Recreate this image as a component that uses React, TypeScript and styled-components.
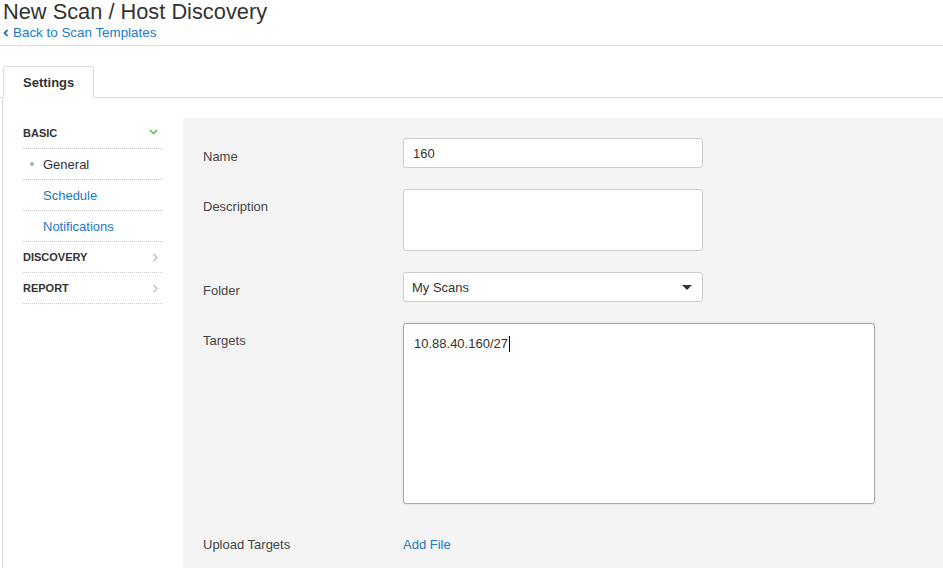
import React from "react";
import styled, { createGlobalStyle } from "styled-components";

const Global = createGlobalStyle`
  html, body { margin: 0; padding: 0; background: #fff; }
  body {
    font-family: "Liberation Sans", Arial, Helvetica, sans-serif;
    color: #333;
    overflow: hidden;
  }
  * { box-sizing: border-box; }
`;

const Page = styled.div`
  width: 943px;
  height: 568px;
  overflow: hidden;
`;

const Header = styled.header`
  padding: 0 0 3px 3px;
  border-bottom: 1px solid #ddd;
`;

const Title = styled.h1`
  margin: 0;
  font-size: 21.8px;
  line-height: 24px;
  font-weight: normal;
  color: #333;
`;

const BackLink = styled.a`
  display: flex;
  align-items: center;
  gap: 4px;
  font-size: 13.4px;
  line-height: 18px;
  color: #1a7ac6;
  text-decoration: none;
`;

const Tabs = styled.div`
  margin-top: 20px;
  padding-left: 3px;
  display: flex;
  border-bottom: 1px solid #ddd;
`;

const Tab = styled.div`
  width: 91px;
  height: 32px;
  margin-bottom: -1px;
  border: 1px solid #ddd;
  border-bottom-color: #fff;
  border-radius: 3px 3px 0 0;
  background: #fff;
  padding-left: 19px;
  padding-top: 1px;
  font-size: 13px;
  font-weight: bold;
  line-height: 30px;
  color: #333;
`;

const Panel = styled.div`
  margin-left: 2px;
  border-left: 1px solid #ddd;
  padding: 20px 0 0 20px;
  display: grid;
  grid-template-columns: 140px 1fr;
  column-gap: 20px;
  height: 470px;
`;

const Nav = styled.nav`
  display: flex;
  flex-direction: column;
`;

const NavRow = styled.div<{ $sub?: boolean; $link?: boolean }>`
  position: relative;
  height: 31px;
  border-bottom: 1px dotted #ccc;
  display: flex;
  align-items: center;
  justify-content: space-between;
  padding-left: ${(p) => (p.$sub ? "20px" : "0")};
  padding-right: 5px;
  font-size: ${(p) => (p.$sub ? "13px" : "11px")};
  font-weight: ${(p) => (p.$sub ? "normal" : "bold")};
  text-transform: ${(p) => (p.$sub ? "none" : "uppercase")};
  color: ${(p) => (p.$link ? "#1a7ac6" : "#333")};
`;

const Bullet = styled.span`
  position: absolute;
  left: 7px;
  top: 13px;
  width: 4px;
  height: 4px;
  border-radius: 50%;
  background: #aaa;
`;

const Content = styled.section`
  background: #f4f4f4;
  padding: 20px 0 0 20px;
  display: flex;
  flex-direction: column;
  gap: 21px;
`;

const FieldRow = styled.div<{ $extra?: number }>`
  display: grid;
  grid-template-columns: 200px 1fr;
  align-items: start;
  margin-top: ${(p) => p.$extra ?? 0}px;
`;

const Label = styled.div<{ $nudge?: number }>`
  padding-top: ${(p) => 8 + (p.$nudge ?? 0)}px;
  font-size: 13px;
  line-height: 20px;
  color: #444;
`;

const Box = styled.div<{ $w: number; $h: number; $focus?: boolean }>`
  width: ${(p) => p.$w}px;
  height: ${(p) => p.$h}px;
  background: #fff;
  border: 1px solid ${(p) => (p.$focus ? "#aaa" : "#ccc")};
  border-radius: 3px;
  box-shadow: ${(p) => (p.$focus ? "0 0 2px rgba(0,0,0,0.15)" : "none")};
  font-size: 13px;
  color: #333;
`;

const InputText = styled.div`
  padding: 1px 9px 0;
  line-height: 28px;
`;

const SelectInner = styled.div`
  display: flex;
  align-items: center;
  justify-content: space-between;
  padding: 1px 10px 0 8px;
  height: 28px;
`;

const Caret = styled.span`
  width: 0;
  height: 0;
  border-left: 5px solid transparent;
  border-right: 5px solid transparent;
  border-top: 5px solid #333;
`;

const AreaText = styled.div`
  padding: 11px 10px;
  line-height: 18px;
  display: flex;
  align-items: center;
`;

const Cursor = styled.span`
  display: inline-block;
  width: 1px;
  height: 16px;
  background: #000;
  margin-left: 1px;
`;

const FileLink = styled.a`
  padding-top: 8px;
  font-size: 13px;
  line-height: 20px;
  color: #1a7ac6;
  text-decoration: none;
`;

const ChevronDown = () => (
  <svg width="9" height="6" viewBox="0 0 9 6" style={{ marginTop: -2 }}>
    <polyline points="1,1 4.5,4.5 8,1" fill="none" stroke="#5cb85c" strokeWidth="1.5" />
  </svg>
);

const ChevronRight = () => (
  <svg width="6" height="9" viewBox="0 0 6 9">
    <polyline points="1.5,1 5,4.5 1.5,8" fill="none" stroke="#bbb" strokeWidth="1.3" />
  </svg>
);

const BackChevron = () => (
  <svg width="6" height="8" viewBox="0 0 6 8">
    <polyline points="4.5,1 1.5,4 4.5,7" fill="none" stroke="#1a7ac6" strokeWidth="1.8" />
  </svg>
);

export default function App() {
  return (
    <Page>
      <Global />
      <Header>
        <Title>New Scan / Host Discovery</Title>
        <BackLink href="#">
          <BackChevron />
          Back to Scan Templates
        </BackLink>
      </Header>
      <Tabs>
        <Tab>Settings</Tab>
      </Tabs>
      <Panel>
        <Nav>
          <NavRow>
            Basic
            <ChevronDown />
          </NavRow>
          <NavRow $sub>
            <Bullet />
            General
          </NavRow>
          <NavRow $sub $link>Schedule</NavRow>
          <NavRow $sub $link>Notifications</NavRow>
          <NavRow>
            Discovery
            <ChevronRight />
          </NavRow>
          <NavRow>
            Report
            <ChevronRight />
          </NavRow>
        </Nav>
        <Content>
          <FieldRow>
            <Label $nudge={1}>Name</Label>
            <Box $w={300} $h={30}>
              <InputText>160</InputText>
            </Box>
          </FieldRow>
          <FieldRow>
            <Label>Description</Label>
            <Box $w={300} $h={62} />
          </FieldRow>
          <FieldRow>
            <Label $nudge={1}>Folder</Label>
            <Box $w={300} $h={30}>
              <SelectInner>
                My Scans
                <Caret />
              </SelectInner>
            </Box>
          </FieldRow>
          <FieldRow>
            <Label>Targets</Label>
            <Box $w={472} $h={181} $focus>
              <AreaText>
                10.88.40.160/27
                <Cursor />
              </AreaText>
            </Box>
          </FieldRow>
          <FieldRow $extra={2}>
            <Label>Upload Targets</Label>
            <FileLink href="#">Add File</FileLink>
          </FieldRow>
        </Content>
      </Panel>
    </Page>
  );
}
